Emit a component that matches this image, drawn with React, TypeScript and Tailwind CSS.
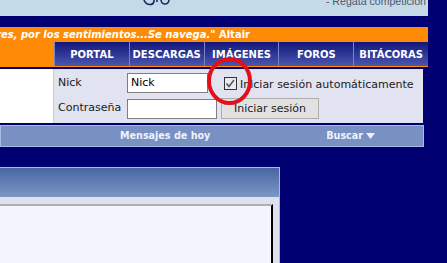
export default function App() {
  const tabs = ["PORTAL", "DESCARGAS", "IMÁGENES", "FOROS", "BITÁCORAS"];
  return (
    <div className="relative w-[447px] h-[263px] overflow-hidden bg-[#000073] font-['DejaVu_Sans',Verdana,sans-serif]">
      {/* top banner */}
      <div className="w-[428px] h-[16px] bg-[#c4dae6] flex items-start overflow-hidden">
        <svg className="ml-[143px] shrink-0" width="28" height="8" viewBox="0 0 28 8">
          <path d="M1 0 Q2.5 4.5 7 4.5 Q10.5 4.5 11 1.5 L11 0" fill="none" stroke="#1c2a66" strokeWidth="1.6" />
          <path d="M14 0 L14 2" fill="none" stroke="#1c2a66" strokeWidth="1.6" />
          <path d="M18 0 Q18.5 4 22 4 Q25.5 4 26 0" fill="none" stroke="#1c2a66" strokeWidth="1.6" />
        </svg>
        <span className="ml-auto mr-[2px] -mt-[5px] whitespace-nowrap text-[10.6px] leading-[12px] text-[#4f5672] font-['Liberation_Sans',Arial,sans-serif]">
          - Regata competición
        </span>
      </div>
      <div className="h-[11px]" />
      {/* orange bar + tabs */}
      <div className="w-[428px] bg-[#ff8a05]">
        <div className="h-[15px] w-[250px] flex justify-end overflow-hidden whitespace-nowrap text-white text-[10px] font-bold leading-[15px]">
          <span className="italic">...por los mares, por los sentimientos...Se navega.</span>
          <span>"&nbsp;Altair</span>
        </div>
        <div className="flex h-[25px] pb-[1px]">
          <div className="w-[54px] shrink-0" />
          <div className="flex-1 grid grid-cols-5">
            {tabs.map((t) => (
              <div
                key={t}
                className="flex items-center justify-center pt-[1px] bg-gradient-to-b from-[#14147a] to-[#4d55ad] border-l border-[#7a82c8] text-white text-[10px] font-bold whitespace-nowrap"
              >
                {t}
              </div>
            ))}
          </div>
        </div>
      </div>
      <div className="h-[2px]" />
      {/* login row */}
      <div className="flex w-[423px] h-[54px]">
        <div className="w-[53px] shrink-0 bg-white border-r border-[#c8cce0] box-content" />
        <div className="flex-1 bg-[#e1e3f0] pl-[4px] pt-[4px] flex flex-col gap-[5px] text-[11px] text-[#1a1a1a]">
          <div className="flex items-center h-[20px]">
            <span className="w-[69px] shrink-0">Nick</span>
            <div className="w-[81px] h-[20px] shrink-0 border border-[#7f7f7f] bg-white pl-[3px] leading-[18px] text-black">Nick</div>
            <svg className="ml-[16px] shrink-0" width="13" height="13" viewBox="0 0 13 13">
              <rect x="0.5" y="0.5" width="12" height="12" fill="#e9e9ef" stroke="#333" />
              <polyline points="2.5,6.5 5,9.5 10,3" fill="none" stroke="#555" strokeWidth="1.5" />
            </svg>
            <span className="ml-[3px] mt-[4px] whitespace-nowrap">Iniciar sesión automáticamente</span>
          </div>
          <div className="flex items-center h-[21px]">
            <span className="w-[69px] shrink-0">Contraseña</span>
            <div className="w-[90px] h-[20px] shrink-0 border border-[#7f7f7f] bg-white" />
            <button className="ml-[4px] w-[98px] h-[21px] shrink-0 bg-[#e1e1e1] border border-[#adadad] text-[#222] text-[11px] leading-[19px]">
              Iniciar sesión
            </button>
          </div>
        </div>
      </div>
      <div className="h-[2px]" />
      {/* blue bar */}
      <div className="w-[424px] h-[22px] bg-[#7891c2] border border-[#a9bbe2] flex items-center text-[#eef2fb] text-[9.6px] font-bold whitespace-nowrap">
        <span className="ml-[119px]">Mensajes de hoy</span>
        <span className="ml-auto mr-[48px] flex items-center">
          Buscar
          <svg className="ml-[3px]" width="9" height="6" viewBox="0 0 9 6">
            <polygon points="0,0 9,0 4.5,6" fill="#eef2fb" />
          </svg>
        </span>
      </div>
      <div className="h-[20px]" />
      {/* bottom panel */}
      <div className="w-[280px] border-t border-r border-[#a9b9e2] bg-[#dee2f0]">
        <div className="h-[29px] bg-gradient-to-b from-[#4866a2] to-[#7d97c4]" />
        <div className="pt-[7px] pr-[6px]">
          <div className="h-[70px] bg-[#f3f4fc] border-t-2 border-t-[#b0b0b0] border-r-2 border-r-black" />
        </div>
      </div>
      {/* red annotation circle */}
      <svg className="absolute left-[205px] top-[55px]" width="50" height="53" viewBox="0 0 50 53">
        <ellipse cx="24.5" cy="26" rx="20.5" ry="22" fill="none" stroke="#e3101c" strokeWidth="4" />
      </svg>
    </div>
  );
}
